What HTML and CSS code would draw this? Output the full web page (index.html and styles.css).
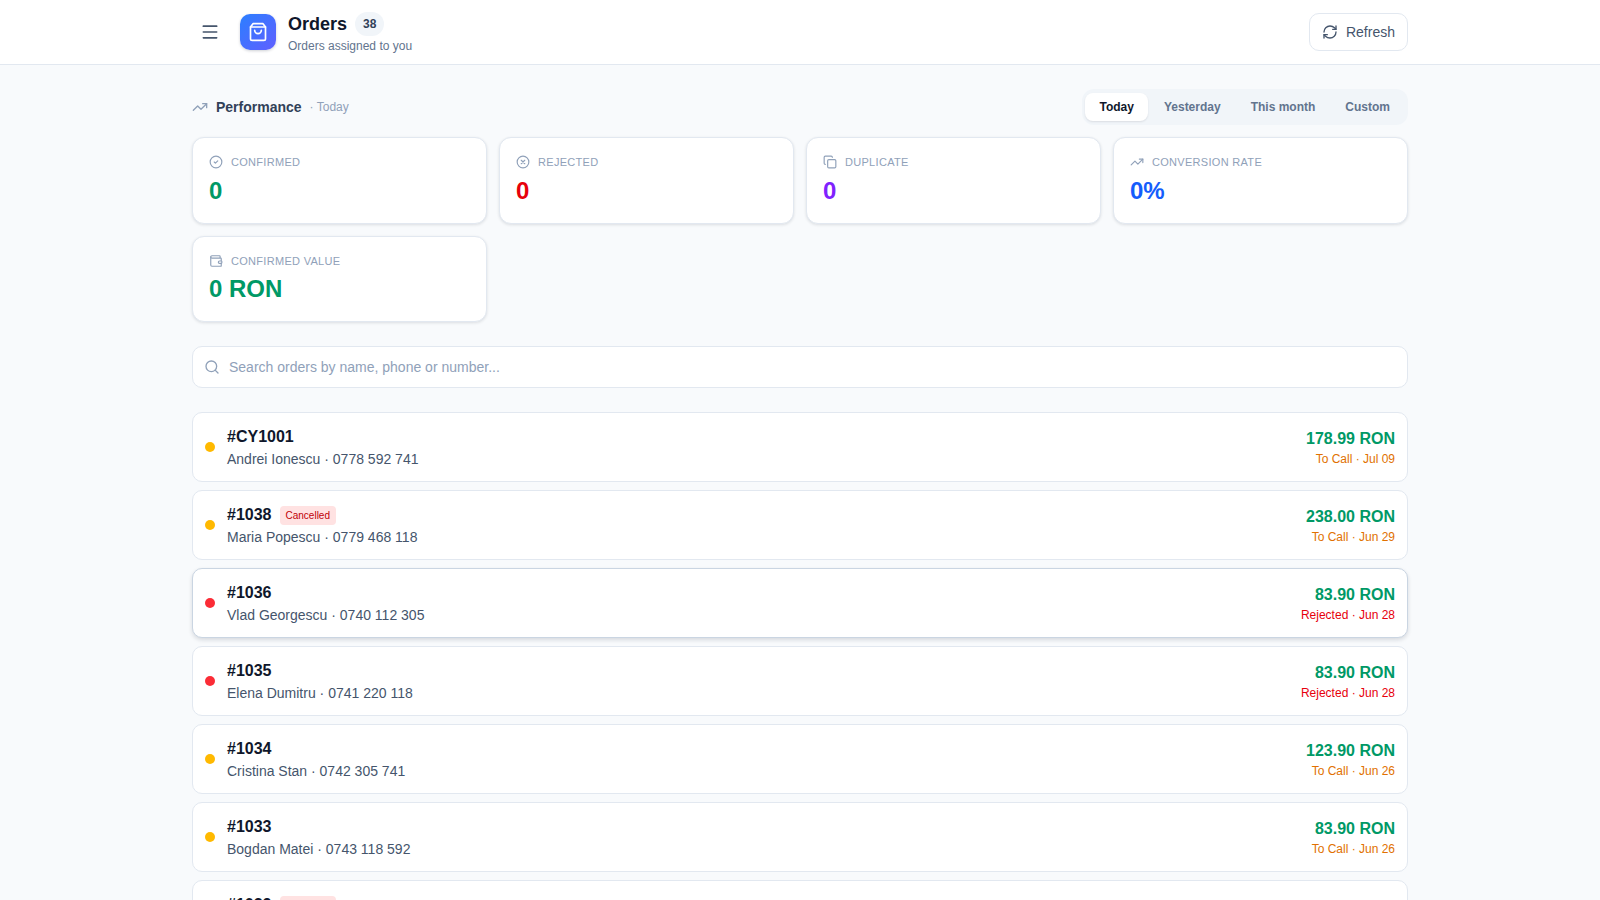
FILE: index.html
```html
<!DOCTYPE html>
<html lang="en">
<head>
    <meta charset="UTF-8">
    <meta name="viewport" content="width=device-width, initial-scale=1.0">
    <title>Orders</title>
    <link rel="stylesheet" href="styles.css">
</head>
<body>
    <header class="topbar">
        <div class="topbar-inner">
            <div class="topbar-left">
                <button class="menu-button" type="button" aria-label="Menu">
                    <svg class="icon" width="20" height="20" viewBox="0 0 24 24"><path d="M4 5h16M4 12h16M4 19h16"/></svg>
                </button>
                <div class="logo">
                    <svg class="icon" width="20" height="20" viewBox="0 0 24 24"><path d="M6 2 3 6v14a2 2 0 0 0 2 2h14a2 2 0 0 0 2-2V6l-3-4Z"/><path d="M3 6h18"/><path d="M16 10a4 4 0 0 1-8 0"/></svg>
                </div>
                <div>
                    <div class="title-line">
                        <h1>Orders</h1>
                        <span class="count">38</span>
                    </div>
                    <p class="subtitle">Orders assigned to you</p>
                </div>
            </div>
            <button class="refresh-button" type="button">
                <svg class="icon" width="16" height="16" viewBox="0 0 24 24"><path d="M3 12a9 9 0 0 1 9-9 9.75 9.75 0 0 1 6.74 2.74L21 8"/><path d="M21 3v5h-5"/><path d="M21 12a9 9 0 0 1-9 9 9.75 9.75 0 0 1-6.74-2.74L3 16"/><path d="M8 16H3v5"/></svg>
                Refresh
            </button>
        </div>
    </header>

    <main class="container">
        <section class="perf-head">
            <div class="perf-title">
                <svg class="icon" width="16" height="16" viewBox="0 0 24 24"><path d="M22 7 13.5 15.5 8.5 10.5 2 17"/><path d="M16 7h6v6"/></svg>
                <h2>Performance</h2>
                <span class="perf-range">· Today</span>
            </div>
            <div class="tabs">
                <button class="tab active" type="button">Today</button>
                <button class="tab" type="button">Yesterday</button>
                <button class="tab" type="button">This month</button>
                <button class="tab" type="button">Custom</button>
            </div>
        </section>

        <section class="stats">
            <div class="stat">
                <div class="stat-label">
                    <svg class="icon" width="14" height="14" viewBox="0 0 24 24"><circle cx="12" cy="12" r="10"/><path d="m9 12 2 2 4-4"/></svg>
                    Confirmed
                </div>
                <div class="stat-value green">0</div>
            </div>
            <div class="stat">
                <div class="stat-label">
                    <svg class="icon" width="14" height="14" viewBox="0 0 24 24"><circle cx="12" cy="12" r="10"/><path d="m15 9-6 6M9 9l6 6"/></svg>
                    Rejected
                </div>
                <div class="stat-value red">0</div>
            </div>
            <div class="stat">
                <div class="stat-label">
                    <svg class="icon" width="14" height="14" viewBox="0 0 24 24"><rect x="8" y="8" width="14" height="14" rx="2"/><path d="M4 16c-1.1 0-2-.9-2-2V4c0-1.1.9-2 2-2h10c1.1 0 2 .9 2 2"/></svg>
                    Duplicate
                </div>
                <div class="stat-value violet">0</div>
            </div>
            <div class="stat">
                <div class="stat-label">
                    <svg class="icon" width="14" height="14" viewBox="0 0 24 24"><path d="M22 7 13.5 15.5 8.5 10.5 2 17"/><path d="M16 7h6v6"/></svg>
                    Conversion rate
                </div>
                <div class="stat-value blue">0%</div>
            </div>
            <div class="stat">
                <div class="stat-label">
                    <svg class="icon" width="14" height="14" viewBox="0 0 24 24"><path d="M19 7V4a1 1 0 0 0-1-1H5a2 2 0 0 0 0 4h15a1 1 0 0 1 1 1v4h-3a2 2 0 0 0 0 4h3a1 1 0 0 0 1-1v-2a1 1 0 0 0-1-1"/><path d="M3 5v14a2 2 0 0 0 2 2h15a1 1 0 0 0 1-1v-4"/></svg>
                    Confirmed value
                </div>
                <div class="stat-value green">0 RON</div>
            </div>
        </section>

        <div class="search">
            <svg class="icon" width="16" height="16" viewBox="0 0 24 24"><circle cx="11" cy="11" r="8"/><path d="m21 21-4.3-4.3"/></svg>
            <input type="text" placeholder="Search orders by name, phone or number...">
        </div>

        <section class="orders">
            <div class="order">
                <span class="dot amber"></span>
                <div class="order-info">
                    <div class="order-number">#CY1001</div>
                    <div class="order-client">Andrei Ionescu · 0778 592 741</div>
                </div>
                <div class="order-side">
                    <div class="order-amount">178.99 RON</div>
                    <div class="order-status orange">To Call · Jul 09</div>
                </div>
            </div>
            <div class="order">
                <span class="dot amber"></span>
                <div class="order-info">
                    <div class="order-number">#1038 <span class="tag">Cancelled</span></div>
                    <div class="order-client">Maria Popescu · 0779 468 118</div>
                </div>
                <div class="order-side">
                    <div class="order-amount">238.00 RON</div>
                    <div class="order-status orange">To Call · Jun 29</div>
                </div>
            </div>
            <div class="order selected">
                <span class="dot crimson"></span>
                <div class="order-info">
                    <div class="order-number">#1036</div>
                    <div class="order-client">Vlad Georgescu · 0740 112 305</div>
                </div>
                <div class="order-side">
                    <div class="order-amount">83.90 RON</div>
                    <div class="order-status red">Rejected · Jun 28</div>
                </div>
            </div>
            <div class="order">
                <span class="dot crimson"></span>
                <div class="order-info">
                    <div class="order-number">#1035</div>
                    <div class="order-client">Elena Dumitru · 0741 220 118</div>
                </div>
                <div class="order-side">
                    <div class="order-amount">83.90 RON</div>
                    <div class="order-status red">Rejected · Jun 28</div>
                </div>
            </div>
            <div class="order">
                <span class="dot amber"></span>
                <div class="order-info">
                    <div class="order-number">#1034</div>
                    <div class="order-client">Cristina Stan · 0742 305 741</div>
                </div>
                <div class="order-side">
                    <div class="order-amount">123.90 RON</div>
                    <div class="order-status orange">To Call · Jun 26</div>
                </div>
            </div>
            <div class="order">
                <span class="dot amber"></span>
                <div class="order-info">
                    <div class="order-number">#1033</div>
                    <div class="order-client">Bogdan Matei · 0743 118 592</div>
                </div>
                <div class="order-side">
                    <div class="order-amount">83.90 RON</div>
                    <div class="order-status orange">To Call · Jun 26</div>
                </div>
            </div>
            <div class="order">
                <span class="dot amber"></span>
                <div class="order-info">
                    <div class="order-number">#1032 <span class="tag">Cancelled</span></div>
                    <div class="order-client">Ioana Marin · 0744 592 118</div>
                </div>
                <div class="order-side">
                    <div class="order-amount">83.90 RON</div>
                    <div class="order-status orange">To Call · Jun 25</div>
                </div>
            </div>
        </section>
    </main>
</body>
</html>
```

FILE: styles.css
```css
* {
    box-sizing: border-box;
}
html, body {
    height: 100%;
    overflow: hidden;
}
body {
    margin: 0;
    font-family: "Liberation Sans", Arial, sans-serif;
    background-color: #f8fafc;
    color: #0f172b;
}
h1, h2, p {
    margin: 0;
}
button {
    font-family: inherit;
    cursor: pointer;
}
.icon {
    display: block;
    flex: none;
    fill: none;
    stroke: currentColor;
    stroke-width: 2;
    stroke-linecap: round;
    stroke-linejoin: round;
}

/* top bar */
.topbar {
    background-color: #fff;
    border-bottom: 1px solid #e2e8f0;
}
.topbar-inner {
    max-width: 1280px;
    height: 64px;
    margin: auto;
    padding: 0 32px;
    display: flex;
    align-items: center;
    justify-content: space-between;
}
.topbar-left {
    display: flex;
    align-items: center;
    gap: 12px;
}
.menu-button {
    width: 36px;
    height: 36px;
    border: none;
    background: none;
    color: #45556c;
    display: flex;
    align-items: center;
    justify-content: center;
    padding: 0;
}
.logo {
    width: 36px;
    height: 36px;
    border-radius: 10px;
    background: linear-gradient(135deg, #2b7fff, #615fff);
    box-shadow: 0 1px 3px rgba(15, 23, 43, 0.2);
    color: #fff;
    display: flex;
    align-items: center;
    justify-content: center;
}
.title-line {
    display: flex;
    align-items: center;
    gap: 8px;
    padding-top: 1px;
}
h1 {
    font-size: 18px;
    line-height: 24px;
    font-weight: 700;
    color: #0f172b;
}
.count {
    height: 24px;
    padding: 0 8px;
    border-radius: 12px;
    background-color: #f1f5f9;
    color: #314158;
    font-size: 12px;
    font-weight: 700;
    line-height: 24px;
}
.subtitle {
    font-size: 12px;
    line-height: 16px;
    margin-top: 2px;
    color: #62748e;
}
.refresh-button {
    height: 38px;
    padding: 0 12px;
    display: flex;
    align-items: center;
    gap: 8px;
    background-color: #fff;
    border: 1px solid #e2e8f0;
    border-radius: 10px;
    color: #45556c;
    font-size: 14px;
}

/* performance */
.container {
    max-width: 1280px;
    margin: auto;
    padding: 24px 32px;
}
.perf-head {
    display: flex;
    align-items: center;
    justify-content: space-between;
    margin-bottom: 12.3px;
}
.perf-title {
    display: flex;
    align-items: center;
    gap: 8px;
    color: #90a1b9;
}
h2 {
    font-size: 14px;
    font-weight: 700;
    color: #314158;
}
.perf-range {
    font-size: 12px;
    color: #90a1b9;
}
.tabs {
    display: flex;
    height: 36px;
    padding: 4px 4px 4px 3px;
    gap: 2px;
    background-color: #f1f5f9;
    border-radius: 12px;
}
.tab {
    border: none;
    background: none;
    padding: 0 14px;
    border-radius: 8px;
    font-size: 12px;
    font-weight: 700;
    color: #62748e;
}
.tab.active {
    background-color: #fff;
    color: #0f172b;
    box-shadow: 0 1px 2px rgba(15, 23, 43, 0.1);
}
.stats {
    display: grid;
    grid-template-columns: repeat(4, 1fr);
    gap: 12px;
    margin-bottom: 23.7px;
}
.stat {
    height: 86.5px;
    padding: 16px;
    background-color: #fff;
    border: 1px solid #e2e8f0;
    border-radius: 12px;
    box-shadow: 0 1px 3px rgba(15, 23, 43, 0.12);
}
.stat-label {
    display: flex;
    align-items: center;
    gap: 8px;
    font-size: 11px;
    line-height: 16px;
    letter-spacing: 0.3px;
    text-transform: uppercase;
    color: #90a1b9;
}
.stat-value {
    margin-top: 4.4px;
    font-size: 24px;
    line-height: 32px;
    font-weight: 700;
}
.green { color: #009966; }
.red { color: #e7000b; }
.violet { color: #7f22fe; }
.blue { color: #155dfc; }
.orange { color: #e17100; }

/* search */
.search {
    height: 42px;
    display: flex;
    align-items: center;
    gap: 9px;
    padding: 0 11px;
    background-color: #fff;
    border: 1px solid #e2e8f0;
    border-radius: 10px;
    color: #90a1b9;
    margin-bottom: 24px;
}
.search input {
    flex: 1;
    border: none;
    outline: none;
    padding: 0;
    background: none;
    font-family: inherit;
    font-size: 14px;
    color: #0f172b;
}
.search input::placeholder {
    color: #90a1b9;
}

/* orders */
.orders {
    display: flex;
    flex-direction: column;
    gap: 8px;
}
.order {
    height: 70px;
    flex: none;
    display: flex;
    align-items: center;
    gap: 12px;
    padding: 0 12px;
    background-color: #fff;
    border: 1px solid #e2e8f0;
    border-radius: 10px;
}
.order.selected {
    border-color: #cad5e2;
    box-shadow: 0 2px 4px rgba(15, 23, 43, 0.14);
}
.dot {
    width: 10px;
    height: 10px;
    border-radius: 50%;
    flex: none;
}
.dot.amber { background-color: #ffb900; }
.dot.crimson { background-color: #fb2c36; }
.order-info {
    flex: 1;
}
.order-number {
    display: flex;
    align-items: center;
    gap: 8px;
    font-size: 16px;
    line-height: 24px;
    font-weight: 700;
    color: #0f172b;
}
.tag {
    height: 19px;
    margin-top: 2px;
    padding: 0 6px;
    border-radius: 4px;
    background-color: #ffe2e2;
    color: #c10007;
    font-size: 10px;
    line-height: 19px;
    font-weight: 400;
}
.order-client {
    font-size: 14px;
    line-height: 20px;
    color: #45556c;
}
.order-side {
    text-align: right;
}
.order-amount {
    font-size: 16px;
    line-height: 24px;
    font-weight: 700;
    color: #009966;
}
.order-status {
    font-size: 12px;
    line-height: 16px;
}
```
